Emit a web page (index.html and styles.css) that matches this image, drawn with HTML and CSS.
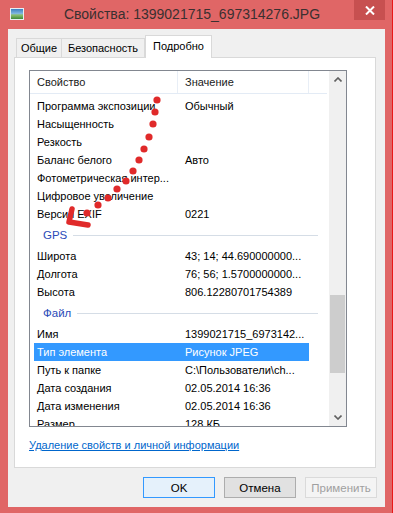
FILE: index.html
```html
<!DOCTYPE html>
<html>
<head>
  <meta charset="UTF-8">
  <link rel="stylesheet" href="styles.css">
</head>
<body>
  <div class="window">
    <div class="titlebar">
      <span class="app-icon"></span>
      <div class="title">Свойства: 1399021715_697314276.JPG</div>
      <div class="close-button">
        <svg width="10" height="9" viewBox="0 0 10 9"><path d="M1 0.5 L9 8.5 M9 0.5 L1 8.5" stroke="#fff" stroke-width="2"/></svg>
      </div>
    </div>

    <div class="client">
      <div class="tabs">
        <div class="tab">Общие</div>
        <div class="tab">Безопасность</div>
        <div class="tab active">Подробно</div>
      </div>

      <div class="panel">
        <div class="list-box">
          <div class="list-content">
            <div class="list-header">
              <div class="head-cell col-name">Свойство</div>
              <div class="head-cell col-value">Значение</div>
              <div class="head-cell col-rest"></div>
            </div>
            <div class="rows">
              <div class="row"><span class="cell-name">Программа экспозиции</span><span class="cell-value">Обычный</span></div>
              <div class="row"><span class="cell-name">Насыщенность</span><span class="cell-value"></span></div>
              <div class="row"><span class="cell-name">Резкость</span><span class="cell-value"></span></div>
              <div class="row"><span class="cell-name">Баланс белого</span><span class="cell-value">Авто</span></div>
              <div class="row"><span class="cell-name">Фотометрическая интер...</span><span class="cell-value"></span></div>
              <div class="row"><span class="cell-name">Цифровое увеличение</span><span class="cell-value"></span></div>
              <div class="row"><span class="cell-name">Версия EXIF</span><span class="cell-value">0221</span></div>
              <div class="group"><span class="group-title">GPS</span><span class="group-line"></span></div>
              <div class="row"><span class="cell-name">Широта</span><span class="cell-value">43; 14; 44.690000000...</span></div>
              <div class="row"><span class="cell-name">Долгота</span><span class="cell-value">76; 56; 1.5700000000...</span></div>
              <div class="row"><span class="cell-name">Высота</span><span class="cell-value">806.12280701754389</span></div>
              <div class="group"><span class="group-title">Файл</span><span class="group-line"></span></div>
              <div class="row"><span class="cell-name">Имя</span><span class="cell-value">1399021715_6973142...</span></div>
              <div class="row selected"><span class="cell-name">Тип элемента</span><span class="cell-value">Рисунок JPEG</span></div>
              <div class="row"><span class="cell-name">Путь к папке</span><span class="cell-value">C:\Пользователи\ch...</span></div>
              <div class="row"><span class="cell-name">Дата создания</span><span class="cell-value">02.05.2014 16:36</span></div>
              <div class="row"><span class="cell-name">Дата изменения</span><span class="cell-value">02.05.2014 16:36</span></div>
              <div class="row"><span class="cell-name">Размер</span><span class="cell-value">128 КБ</span></div>
            </div>
          </div>
          <div class="scrollbar">
            <div class="scroll-arrow">
              <svg width="8" height="5" viewBox="0 0 8 5"><path d="M0.5 4.5 L4 1 L7.5 4.5" fill="none" stroke="#606060" stroke-width="1.6"/></svg>
            </div>
            <div class="scroll-track"><div class="scroll-thumb"></div></div>
            <div class="scroll-arrow">
              <svg width="8" height="5" viewBox="0 0 8 5"><path d="M0.5 0.5 L4 4 L7.5 0.5" fill="none" stroke="#606060" stroke-width="1.6"/></svg>
            </div>
          </div>
        </div>
        <a href="#" class="remove-link">Удаление свойств и личной информации</a>
      </div>

      <div class="button-group">
        <button class="default">OK</button>
        <button>Отмена</button>
        <button disabled>Применить</button>
      </div>
    </div>
  </div>

  <!-- hand drawn red arrow over the list -->
  <svg class="annotation" width="393" height="513" viewBox="0 0 393 513">
    <g fill="#e02a2a">
      <circle cx="157" cy="100" r="3.6"/>
      <circle cx="155" cy="112" r="3.6"/>
      <circle cx="153" cy="124" r="3.6"/>
      <circle cx="149" cy="137" r="3.6"/>
      <circle cx="144" cy="149" r="3.6"/>
      <circle cx="139" cy="160" r="3.6"/>
      <circle cx="133" cy="171" r="3.6"/>
      <circle cx="126" cy="181" r="3.6"/>
      <circle cx="117" cy="189" r="3.6"/>
      <circle cx="108" cy="198" r="3.6"/>
      <circle cx="98" cy="205" r="3.6"/>
      <circle cx="87" cy="213" r="3.6"/>
    </g>
    <path d="M72 209 L69 222 L88 225" fill="none" stroke="#e02a2a" stroke-width="5.5" stroke-linecap="round" stroke-linejoin="round"/>
  </svg>
</body>
</html>
```

FILE: styles.css
```css
body {
  margin: 0;
  width: 393px;
  height: 513px;
  overflow: hidden;
  background-color: #e06666;
  font-family: "Liberation Sans", Arial, sans-serif;
  font-size: 11px;
  color: #000;
  position: relative;
}

.window {
  display: flex;
  flex-direction: column;
  height: 513px;
  border-right: 1px solid #e81818;
  box-sizing: border-box;
}

/* Title bar */
.titlebar {
  display: flex;
  align-items: flex-start;
  height: 29px;
}

.app-icon {
  width: 12px;
  height: 10px;
  margin: 8px 0 0 10px;
  border: 1px solid #e8eef2;
  background: linear-gradient(to bottom, #3b7fc0 0%, #7fb6de 45%, #8cc070 60%, #3f8a3a 100%);
}

.title {
  flex: 1;
  text-align: center;
  font-size: 14px;
  color: #3a3030;
  padding-top: 6px;
  padding-left: 6px;
}

.close-button {
  width: 31px;
  height: 20px;
  margin-right: 7px;
  background-color: #c75050;
  display: flex;
  align-items: center;
  justify-content: center;
}

/* Client area */
.client {
  margin: 0 7px 0 8px;
  height: 478px;
  background-color: #f0f0f0;
  padding-top: 6px;
  box-sizing: border-box;
}

.tabs {
  display: flex;
  align-items: flex-end;
  padding-left: 8px;
  height: 22px;
  position: relative;
  z-index: 1;
}

.tab {
  height: 19px;
  line-height: 19px;
  text-align: center;
  border: 1px solid #d9d9d9;
  border-bottom: none;
  background-color: #f0f0f0;
  box-sizing: border-box;
}

.tab + .tab {
  border-left: none;
}

.tab:first-child {
  width: 46px;
}

.tab:nth-child(2) {
  width: 83px;
}

.tab.active {
  width: 67px;
  height: 23px;
  line-height: 21px;
  background-color: #fff;
  border-left: 1px solid #d9d9d9;
  margin-bottom: -1px;
}

.panel {
  margin-left: 6px;
  width: 362px;
  height: 411px;
  border: 1px solid #d9d9d9;
  background-color: #fff;
  box-sizing: border-box;
  padding: 12px 0 0 14px;
}

/* Details list */
.list-box {
  display: flex;
  width: 318px;
  height: 357px;
  border: 1px solid #828790;
  box-sizing: border-box;
}

.list-content {
  width: 299px;
  overflow: hidden;
}

.list-header {
  display: flex;
  height: 23px;
  border-bottom: 1px solid #e3ebf5;
  box-sizing: border-box;
  margin-right: 2px;
}

.head-cell {
  line-height: 22px;
  padding-left: 7px;
  color: #1a1a1a;
  box-sizing: border-box;
}

.head-cell.col-name {
  width: 148px;
  border-right: 1px solid #e8eef6;
}

.head-cell.col-value {
  width: 131px;
  border-right: 1px solid #e8eef6;
}

.head-cell.col-rest {
  flex: 1;
}

.rows {
  padding-top: 3px;
}

.row {
  display: flex;
  height: 18px;
  line-height: 18px;
  margin-left: 4px;
  width: 275px;
  white-space: nowrap;
}

.row.selected {
  background-color: #3399ff;
  color: #fff;
}

.cell-name {
  width: 144px;
  padding-left: 3px;
  box-sizing: border-box;
}

.cell-value {
  flex: 1;
  padding-left: 7px;
}

.group {
  display: flex;
  align-items: center;
  height: 24px;
  margin-left: 4px;
  width: 284px;
}

.group-title {
  padding-left: 9px;
  color: #2a4bb8;
  font-size: 11.5px;
}

.group-line {
  flex: 1;
  height: 1px;
  margin-left: 6px;
  background-color: #d5dde6;
}

/* Scroll bar */
.scrollbar {
  width: 17px;
  display: flex;
  flex-direction: column;
  background-color: #f0f0f0;
}

.scroll-arrow {
  height: 17px;
  display: flex;
  align-items: center;
  justify-content: center;
}

.scroll-track {
  flex: 1;
}

.scroll-thumb {
  margin: 207px 1px 0 1px;
  height: 78px;
  background-color: #cdcdcd;
}

.remove-link {
  display: inline-block;
  margin-top: 11px;
  color: #0066cc;
  text-decoration: underline;
  line-height: 14px;
}

/* Buttons */
.button-group {
  display: flex;
  justify-content: flex-end;
  gap: 9px;
  padding-right: 8px;
  margin-top: 9px;
}

button {
  width: 72px;
  height: 21px;
  padding: 0;
  font-family: "Liberation Sans", Arial, sans-serif;
  font-size: 11.5px;
  color: #000;
  background-color: #e1e1e1;
  border: 1px solid #adadad;
}

button.default {
  border-color: #3399ff;
  background-color: #e5f1fb;
}

button:disabled {
  color: #a0a0a0;
  background-color: #f4f4f4;
  border-color: #dadada;
}

.annotation {
  position: absolute;
  left: 0;
  top: 0;
  pointer-events: none;
}
```
